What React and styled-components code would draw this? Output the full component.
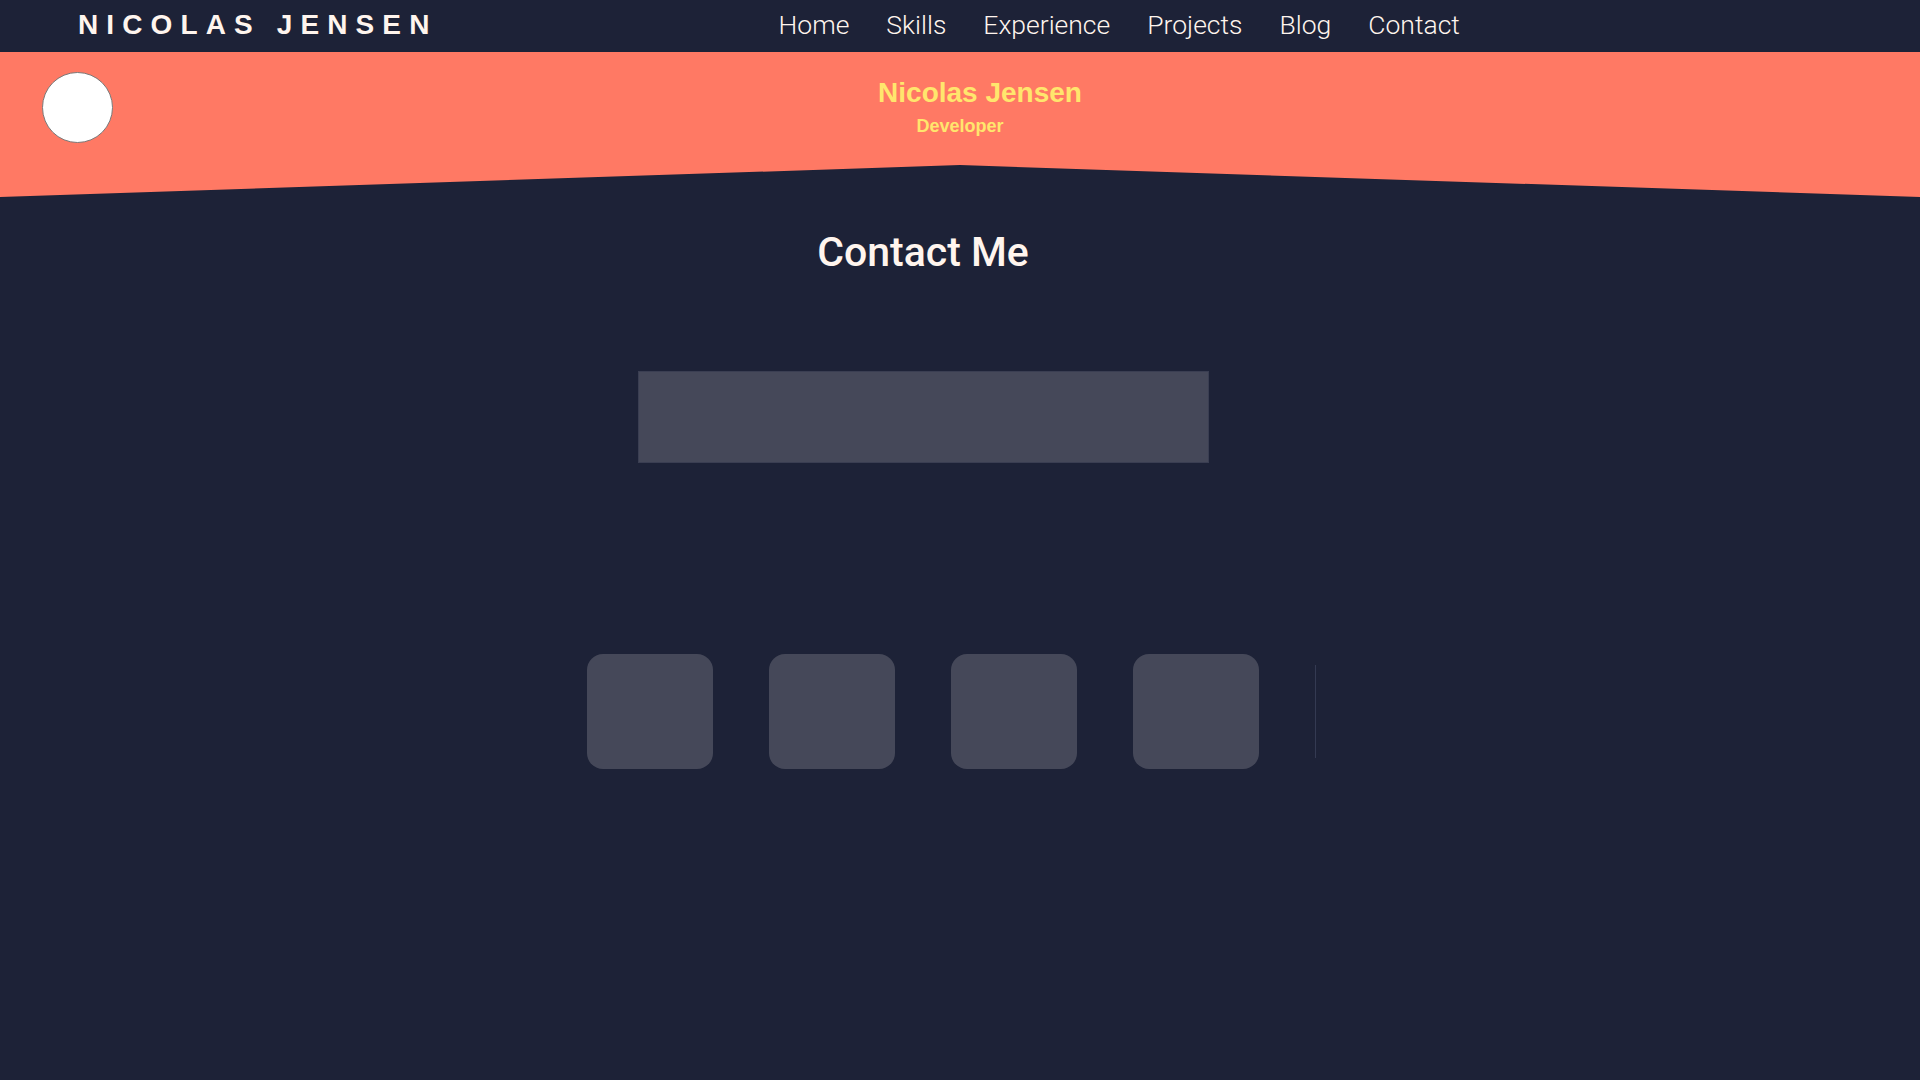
import React from 'react';
import styled, {createGlobalStyle} from 'styled-components';

const GlobalStyle = createGlobalStyle`
  body {
    margin: 0;
    background: #1d2237;
    font-family: "Liberation Sans", Arial, sans-serif;
  }
`;

const Page = styled.div`
  min-height: 1080px;
  background: #1d2237;
`;

const NavWrapper = styled.nav`
  height: 52px;
  display: flex;
  align-items: center;
  padding-left: 78px;
  background: #1d2237;
`;

const Brand = styled.a`
  color: #fff5ee;
  font-family: "Liberation Sans", Arial, sans-serif;
  font-weight: 700;
  font-size: 28px;
  letter-spacing: 0.29em;
  text-decoration: none;
  margin-top: -3px;
`;

const NavList = styled.ul`
  display: flex;
  gap: 37px;
  margin: -3px 0 0 341px;
  padding: 0;
  list-style: none;
`;

const NavLink = styled.a`
  color: #fff5ee;
  font-family: Roboto, "Liberation Sans", sans-serif;
  font-weight: 300;
  font-size: 26.5px;
  text-decoration: none;
`;

const Hero = styled.header`
  height: 145px;
  box-sizing: border-box;
  padding: 20px 42px 0;
  display: grid;
  grid-template-columns: 1fr auto 1fr;
  align-items: start;
  background: #ff7964;
  clip-path: polygon(0 0, 100% 0, 100% 100%, 50% 78%, 0 100%);
`;

const Avatar = styled.div`
  width: 69px;
  height: 69px;
  border-radius: 50%;
  background: #fff;
  border: 1px solid #7a7a7a;
`;

const Titles = styled.div`
  display: flex;
  flex-direction: column;
  align-items: center;
  color: #ffe66d;
  font-weight: 700;
  padding-top: 5px;
`;

const Name = styled.h1`
  margin: 0;
  padding-left: 40px;
  font-size: 28px;
`;

const Role = styled.h2`
  margin: 7px 0 0;
  font-size: 18px;
`;

const Main = styled.main`
  padding-right: 74px;
  display: flex;
  flex-direction: column;
  align-items: center;
`;

const Heading = styled.h2`
  margin: 31px 0 0;
  color: #fff5ee;
  font-family: Roboto, "Liberation Sans", sans-serif;
  font-weight: 500;
  font-size: 41px;
`;

const FormBox = styled.div`
  width: 571px;
  height: 92px;
  box-sizing: border-box;
  margin-top: 95px;
  background: #454859;
  border: 1px solid #3a3e52;
`;

const LinkRow = styled.div`
  display: flex;
  align-items: center;
  gap: 56px;
  margin-top: 191px;
`;

const Tile = styled.div`
  width: 126px;
  height: 115px;
  border-radius: 16px;
  background: #454859;
`;

const Divider = styled.div`
  width: 1px;
  height: 93px;
  background: #343a52;
  margin-right: -57px;
`;

const links = ['Home', 'Skills', 'Experience', 'Projects', 'Blog', 'Contact'];

const App = () => {
  return (
    <>
      <GlobalStyle />
      <Page>
        <NavWrapper>
          <Brand href="#">NICOLAS JENSEN</Brand>
          <NavList>
            {links.map((l) => (
              <li key={l}>
                <NavLink href="#">{l}</NavLink>
              </li>
            ))}
          </NavList>
        </NavWrapper>
        <Hero>
          <Avatar />
          <Titles>
            <Name>Nicolas Jensen</Name>
            <Role>Developer</Role>
          </Titles>
        </Hero>
        <Main>
          <Heading>Contact Me</Heading>
          <FormBox />
          <LinkRow>
            <Tile />
            <Tile />
            <Tile />
            <Tile />
            <Divider />
          </LinkRow>
        </Main>
      </Page>
    </>
  );
};

export default App;
